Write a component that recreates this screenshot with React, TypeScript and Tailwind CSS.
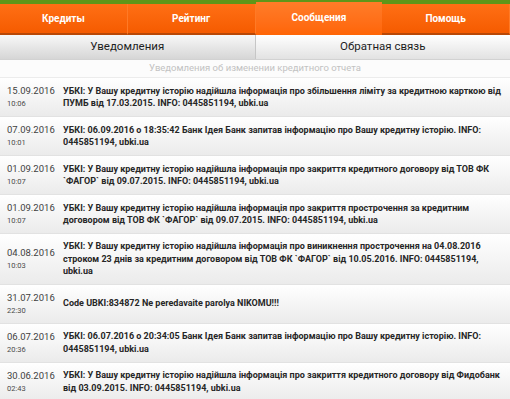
import React from 'react';

const tabs = ['Кредиты', 'Рейтинг', 'Сообщения', 'Помощь'];

const messages = [
  {
    date: '15.09.2016',
    time: '10:06',
    lines: [
      'УБКІ: У Вашу кредитну історію надійшла інформація про збільшення ліміту за кредитною карткою від',
      'ПУМБ від 17.03.2015. INFO: 0445851194, ubki.ua',
    ],
  },
  {
    date: '07.09.2016',
    time: '10:01',
    lines: [
      'УБКІ: 06.09.2016 о 18:35:42 Банк Ідея Банк запитав інформацію про Вашу кредитну історію. INFO:',
      '0445851194, ubki.ua',
    ],
  },
  {
    date: '01.09.2016',
    time: '10:07',
    lines: [
      'УБКІ: У Вашу кредитну історію надійшла інформація про закриття кредитного договору від ТОВ ФК',
      '`ФАГОР` від 09.07.2015. INFO: 0445851194, ubki.ua',
    ],
  },
  {
    date: '01.09.2016',
    time: '10:07',
    lines: [
      'УБКІ: У Вашу кредитну історію надійшла інформація про закриття прострочення за кредитним',
      'договором від ТОВ ФК `ФАГОР` від 09.07.2015. INFO: 0445851194, ubki.ua',
    ],
  },
  {
    date: '04.08.2016',
    time: '10:03',
    lines: [
      'УБКІ: У Вашу кредитну історію надійшла інформація про виникнення прострочення на 04.08.2016',
      'строком 23 днів за кредитним договором від ТОВ ФК `ФАГОР` від 10.05.2016. INFO: 0445851194,',
      'ubki.ua',
    ],
  },
  {
    date: '31.07.2016',
    time: '22:30',
    lines: ['Code UBKI:834872 Ne peredavaite parolya NIKOMU!!!'],
  },
  {
    date: '06.07.2016',
    time: '20:36',
    lines: [
      'УБКІ: 06.07.2016 о 20:34:05 Банк Ідея Банк запитав інформацію про Вашу кредитну історію. INFO:',
      '0445851194, ubki.ua',
    ],
  },
  {
    date: '30.06.2016',
    time: '02:43',
    lines: [
      'УБКІ: У Вашу кредитну історію надійшла інформація про закриття кредитного договору від Фидобанк',
      'від 03.09.2015. INFO: 0445851194, ubki.ua',
    ],
  },
  { date: '', time: '', lines: [''] },
];

export default function App() {
  return (
    <div className="w-[510px] h-[399px] overflow-hidden bg-white font-['Roboto',sans-serif]">
      <nav className="flex h-[35px] bg-[#5f9619]">
        {tabs.map((t, i) => {
          const active = i === 2;
          return (
            <div
              key={t}
              className={
                active
                  ? 'flex-1 mt-[2px] pb-[2px] flex items-center justify-center text-white font-bold text-[10px] bg-gradient-to-b from-[#ff7c28] to-[#ff6505]'
                  : 'flex-1 mt-[4px] flex items-center justify-center text-white font-bold text-[10px] bg-gradient-to-b from-[#ff6f14] to-[#f55b00] border-b-2 border-[#b94806] border-r border-r-[#ff7a26]'
              }
            >
              {t}
            </div>
          );
        })}
      </nav>
      <div className="flex h-[25px] border-b border-[#d2d2d2]">
        <div className="flex-1 flex items-center justify-center text-[11.5px] text-[#1e1e1e] bg-gradient-to-b from-[#f8f8f8] to-[#d6d6d6] border-r border-[#c6c6c6]">
          Уведомления
        </div>
        <div className="flex-1 flex items-center justify-center text-[11.5px] text-[#1e1e1e] bg-gradient-to-b from-white to-[#e2e2e2]">
          Обратная связь
        </div>
      </div>
      <div className="h-[18px] flex items-center justify-center text-[9.5px] text-[#c2c2c2] bg-[#fcfcfc] border-b border-[#ececec]">
        Уведомления об изменении кредитного отчета
      </div>
      <div className="flex flex-col">
        {messages.map((m, i) => (
          <div
            key={i}
            className="flex items-center min-h-[38px] px-[7px] py-[6px] bg-gradient-to-b from-white to-[#ebebeb] border-b border-[#e2e2e2]"
          >
            <div className="w-[56px] shrink-0 flex flex-col text-[#3f3f3f]">
              <span className="text-[9.5px] leading-[13px]">{m.date}</span>
              <span className="text-[7.5px] leading-[13px] text-[#4a4a4a]">{m.time}</span>
            </div>
            <div className="flex flex-col text-[9px] leading-[12.5px] font-bold text-[#262626] whitespace-nowrap">
              {m.lines.map((l, j) => (
                <span key={j}>{l}</span>
              ))}
            </div>
          </div>
        ))}
      </div>
    </div>
  );
}
